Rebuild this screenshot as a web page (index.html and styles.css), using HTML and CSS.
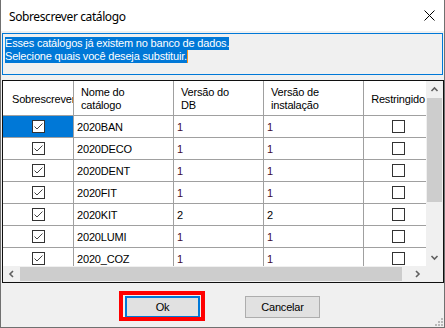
FILE: index.html
```html
<!DOCTYPE html>
<html lang="pt">
<head>
<meta charset="utf-8">
<title>Sobrescrever catálogo</title>
<link rel="stylesheet" href="styles.css">
</head>
<body>
<svg class="defs" width="0" height="0" aria-hidden="true">
  <symbol id="chk" viewBox="0 0 13 13">
    <rect x="0.5" y="0.5" width="12" height="12" fill="#fff" stroke="#333"/>
    <path d="M2.5 6.5 L5 9 L10.5 3.5" fill="none" stroke="#444" stroke-width="1"/>
  </symbol>
  <symbol id="unchk" viewBox="0 0 13 13">
    <rect x="0.5" y="0.5" width="12" height="12" fill="#fff" stroke="#333"/>
  </symbol>
</svg>
<div class="window">
  <div class="titlebar">
    <span class="title">Sobrescrever catálogo</span>
    <svg class="close" width="11" height="11" viewBox="0 0 11 11"><path d="M0.5 0.5 L10.5 10.5 M10.5 0.5 L0.5 10.5" stroke="#000" stroke-width="1"/></svg>
  </div>
  <div class="content">
    <div class="message">
      <span class="sel">Esses catálogos já existem no banco de dados.</span>
      <span class="sel caret">Selecione quais você deseja substituir.</span>
    </div>
    <div class="gridview">
      <div class="viewport">
        <div class="row header">
          <div class="cell c1 hdr">Sobrescrever</div>
          <div class="cell c2 hdr">Nome do<br>catálogo</div>
          <div class="cell c3 hdr">Versão do<br>DB</div>
          <div class="cell c4 hdr">Versão de<br>instalação</div>
          <div class="cell c5 hdr center">Restringido</div>
        </div>
        <div class="row">
          <div class="cell c1 center selected"><svg class="cb"><use href="#chk"/></svg></div>
          <div class="cell c2">2020BAN</div>
          <div class="cell c3 num">1</div>
          <div class="cell c4 num">1</div>
          <div class="cell c5 center"><svg class="cb"><use href="#unchk"/></svg></div>
        </div>
        <div class="row">
          <div class="cell c1 center"><svg class="cb"><use href="#chk"/></svg></div>
          <div class="cell c2">2020DECO</div>
          <div class="cell c3 num">1</div>
          <div class="cell c4 num">1</div>
          <div class="cell c5 center"><svg class="cb"><use href="#unchk"/></svg></div>
        </div>
        <div class="row">
          <div class="cell c1 center"><svg class="cb"><use href="#chk"/></svg></div>
          <div class="cell c2">2020DENT</div>
          <div class="cell c3 num">1</div>
          <div class="cell c4 num">1</div>
          <div class="cell c5 center"><svg class="cb"><use href="#unchk"/></svg></div>
        </div>
        <div class="row">
          <div class="cell c1 center"><svg class="cb"><use href="#chk"/></svg></div>
          <div class="cell c2">2020FIT</div>
          <div class="cell c3 num">1</div>
          <div class="cell c4 num">1</div>
          <div class="cell c5 center"><svg class="cb"><use href="#unchk"/></svg></div>
        </div>
        <div class="row">
          <div class="cell c1 center"><svg class="cb"><use href="#chk"/></svg></div>
          <div class="cell c2">2020KIT</div>
          <div class="cell c3">2</div>
          <div class="cell c4">2</div>
          <div class="cell c5 center"><svg class="cb"><use href="#unchk"/></svg></div>
        </div>
        <div class="row">
          <div class="cell c1 center"><svg class="cb"><use href="#chk"/></svg></div>
          <div class="cell c2">2020LUMI</div>
          <div class="cell c3 num">1</div>
          <div class="cell c4 num">1</div>
          <div class="cell c5 center"><svg class="cb"><use href="#unchk"/></svg></div>
        </div>
        <div class="row">
          <div class="cell c1 center"><svg class="cb"><use href="#chk"/></svg></div>
          <div class="cell c2">2020_COZ</div>
          <div class="cell c3 num">1</div>
          <div class="cell c4 num">1</div>
          <div class="cell c5 center"><svg class="cb"><use href="#unchk"/></svg></div>
        </div>
      </div>
      <div class="vscroll">
        <div class="arrow v"><svg width="17" height="17" viewBox="0 0 17 17"><path d="M5.5 10 L8.5 7 L11.5 10" fill="none" stroke="#606060" stroke-width="1.6"/></svg></div>
        <div class="vthumb"></div>
        <div class="spacer"></div>
        <div class="arrow v"><svg width="17" height="17" viewBox="0 0 17 17"><path d="M5.5 7 L8.5 10 L11.5 7" fill="none" stroke="#606060" stroke-width="1.6"/></svg></div>
      </div>
      <div class="hscroll">
        <div class="arrow h"><svg width="17" height="16" viewBox="0 0 17 16"><path d="M10 5 L7 8 L10 11" fill="none" stroke="#606060" stroke-width="1.6"/></svg></div>
        <div class="hthumb"></div>
        <div class="spacer"></div>
        <div class="arrow h"><svg width="17" height="16" viewBox="0 0 17 16"><path d="M7 5 L10 8 L7 11" fill="none" stroke="#606060" stroke-width="1.6"/></svg></div>
      </div>
      <div class="corner"></div>
    </div>
    <div class="buttons">
      <div class="annotated"><button class="btn btn-default" type="button">Ok</button></div>
      <button class="btn" type="button">Cancelar</button>
    </div>
  </div>
  <svg class="grip" width="8" height="8" viewBox="0 0 8 8"><g fill="#b9b9b9"><rect x="6" y="0" width="2" height="2"/><rect x="3" y="3" width="2" height="2"/><rect x="6" y="3" width="2" height="2"/><rect x="0" y="6" width="2" height="2"/><rect x="3" y="6" width="2" height="2"/><rect x="6" y="6" width="2" height="2"/></g></svg>
</div>
</body>
</html>
```
FILE: styles.css
```css
html, body {
  margin: 0;
  padding: 0;
  background: #fff;
}

.defs {
  position: absolute;
  width: 0;
  height: 0;
  overflow: hidden;
}

.window {
  position: relative;
  width: 445px;
  height: 328px;
  box-sizing: border-box;
  border-left: 1px solid #707070;
  border-right: 1px solid #707070;
  border-bottom: 1px solid #707070;
  display: flex;
  flex-direction: column;
  background: #f0f0f0;
  font-family: "Liberation Sans", Arial, sans-serif;
  font-size: 11px;
  letter-spacing: -0.18px;
  color: #000;
}

.titlebar {
  height: 31px;
  flex: none;
  background: #fff;
  display: flex;
  align-items: center;
  padding-left: 8px;
}

.title {
  font-family: "Noto Sans", "Open Sans", sans-serif;
  font-size: 12px;
  letter-spacing: -0.4px;
  color: #000;
  padding-top: 1px;
}

.close {
  margin-left: auto;
  margin-right: 9px;
  display: block;
}

.content {
  flex: 1;
  display: flex;
  flex-direction: column;
}

.message {
  margin: 2px 0 0 1px;
  width: 441px;
  height: 42px;
  box-sizing: border-box;
  border: 1px solid #0078d7;
  padding: 3px 0 0 2px;
  line-height: 13px;
  background: #f0f0f0;
}

.sel {
  display: block;
  width: fit-content;
  height: 13px;
  background: #0078d7;
  color: #fff;
}

.caret {
  border-right: 1px solid #f7931e;
}

.gridview {
  margin: 5px 0 0 1px;
  width: 442px;
  height: 203px;
  box-sizing: border-box;
  border: 1px solid #101010;
  display: grid;
  grid-template-columns: 1fr 17px;
  grid-template-rows: 1fr 16px;
  background: #fff;
}

.viewport {
  overflow: hidden;
  background: #fff;
}

.row {
  display: flex;
  height: 22px;
}

.row.header {
  height: 35px;
}

.cell {
  flex: none;
  box-sizing: border-box;
  height: 100%;
  border-right: 1px solid #a0a0a0;
  border-bottom: 1px solid #a0a0a0;
  display: flex;
  align-items: center;
  padding-left: 3px;
  white-space: nowrap;
  overflow: hidden;
  background: #fff;
}

.c1 { width: 71px; }
.c2 { width: 100px; }
.c3 { width: 90px; }
.c4 { width: 100px; }
.c5 { width: 68px; border-right: none; }

.hdr {
  padding-left: 7px;
  padding-top: 2px;
  line-height: 13px;
}

.c1.hdr {
  padding-left: 9px;
}

.center {
  justify-content: center;
  padding-left: 0;
}

.c5.hdr.center {
  padding-left: 0;
}

.selected {
  background: #0078d7;
}

.num {
  color: #400a32;
}

.cb {
  width: 13px;
  height: 13px;
  display: block;
}

.vscroll {
  background: #f0f0f0;
  display: flex;
  flex-direction: column;
}

.hscroll {
  background: #f0f0f0;
  display: flex;
  align-items: center;
}

.arrow {
  flex: none;
  display: flex;
}

.arrow.v {
  height: 17px;
}

.arrow.h {
  width: 17px;
  height: 16px;
}

.spacer {
  flex: 1;
}

.vthumb {
  flex: none;
  margin-left: 1px;
  width: 15px;
  height: 104px;
  background: #cdcdcd;
}

.hthumb {
  flex: none;
  width: 382px;
  height: 14px;
  background: #cdcdcd;
}

.corner {
  background: #f0f0f0;
}

.buttons {
  display: flex;
  justify-content: center;
  gap: 45px;
  margin-top: 13px;
}

.btn {
  width: 75px;
  height: 22px;
  box-sizing: border-box;
  margin: 0;
  padding: 0;
  border: 1px solid #adadad;
  background: #e1e1e1;
  font-family: "Liberation Sans", Arial, sans-serif;
  font-size: 11px;
  letter-spacing: -0.18px;
  color: #000;
  display: block;
}

.btn-default {
  border: 2px solid #0078d7;
}

.annotated {
  position: relative;
}

.annotated::after {
  content: "";
  position: absolute;
  left: -6px;
  top: -5px;
  right: -5px;
  bottom: -3px;
  border: 4px solid #ff0000;
  pointer-events: none;
}

.grip {
  position: absolute;
  right: 1px;
  bottom: 1px;
}
```
